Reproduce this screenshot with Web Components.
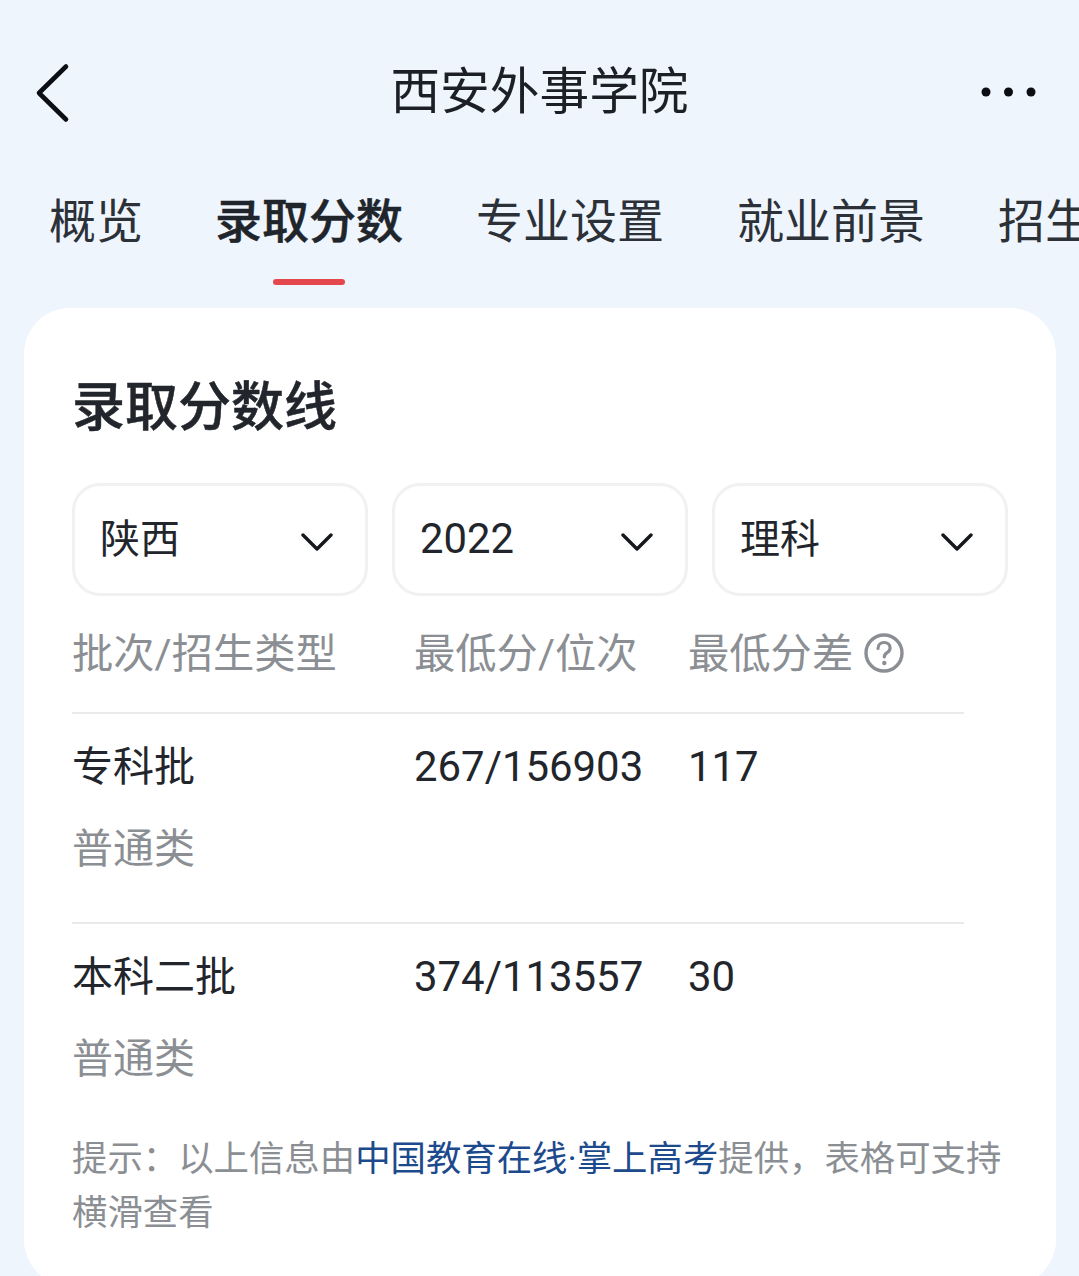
<!DOCTYPE html>
<html lang="zh-CN">
<head>
<meta charset="utf-8">
<title>西安外事学院</title>
<style>
    html, body {
        margin: 0;
        height: 1276px;
        overflow: hidden;
        background: #eff5fd;
        color: #1c2026;
        font-family: Roboto, "Noto Sans CJK SC", sans-serif;
    }
    a { color: #1c4a8c; text-decoration: none; }
</style>
</head>
<body>
<app-page>
    <nav-bar slot="nav">西安外事学院</nav-bar>
    <tab-bar slot="tabs">
        <tab-item first>概览</tab-item>
        <tab-item active>录取分数</tab-item>
        <tab-item>专业设置</tab-item>
        <tab-item>就业前景</tab-item>
        <tab-item>招生</tab-item>
    </tab-bar>
    <score-card slot="card" heading="录取分数线">
        <select-box slot="filters">陕西</select-box>
        <select-box slot="filters" numeric>2022</select-box>
        <select-box slot="filters">理科</select-box>

        <score-head slot="table"></score-head>
        <score-row slot="table" batch="专科批" kind="普通类" score="267/156903" diff="117"></score-row>
        <score-row slot="table" batch="本科二批" kind="普通类" score="374/113557" diff="30"></score-row>

        <div slot="note"><span>提示：以上信息由</span><a>中国教育在线·掌上高考</a><span>提供，表格可支持</span></div>
        <div slot="note">横滑查看</div>
    </score-card>
</app-page>

<script>
// small helper, every element has the same shadow setup
class BaseEl extends HTMLElement {
    render(html) {
        const tpl = document.createElement("template");
        tpl.innerHTML = html;
        this.attachShadow({ mode: "open" }).appendChild(tpl.content.cloneNode(true));
    }
}

class AppPage extends BaseEl {
    connectedCallback() {
        this.render(`
        <style>
            :host {
                display: block;
                width: 1079px;
                height: 1276px;
                overflow: hidden;
                padding-top: 32px;
                box-sizing: border-box;
            }
            .card-wrap { padding: 0 23px 0 24px; }
        </style>
        <slot name="nav"></slot>
        <slot name="tabs"></slot>
        <div class="card-wrap"><slot name="card"></slot></div>
        `);
    }
}

class NavBar extends BaseEl {
    connectedCallback() {
        this.render(`
        <style>
            :host { display: block; }
            .bar {
                height: 120px;
                display: grid;
                grid-template-columns: 1fr auto 1fr;
                align-items: center;
                padding: 0 42px;
            }
            .title { font-size: 49.7px; line-height: 120px; color: #1c2026; }
            .more { justify-self: end; display: block; }
            .back { display: block; margin-left: -7px; margin-top: 2px; }
        </style>
        <div class="bar">
            <svg class="back" width="36" height="62" viewBox="0 0 36 62" fill="none">
                <path d="M31 4.500 4 31 31 57.500" stroke="#0b0e13" stroke-width="4.600" stroke-linecap="round" stroke-linejoin="round"/>
            </svg>
            <div class="title"><slot></slot></div>
            <svg class="more" width="56" height="12" viewBox="0 0 56 12">
                <circle cx="5" cy="6" r="4.500" fill="#0b0e13"/>
                <circle cx="27.500" cy="6" r="4.500" fill="#0b0e13"/>
                <circle cx="50" cy="6" r="4.500" fill="#0b0e13"/>
            </svg>
        </div>
        `);
    }
}

class TabBar extends BaseEl {
    connectedCallback() {
        this.render(`
        <style>
            :host { display: block; overflow: hidden; }
            .tabs {
                display: flex;
                gap: 73px;
                padding: 31px 0 0 48px;
                height: 156px;
                box-sizing: border-box;
                white-space: nowrap;
            }
        </style>
        <div class="tabs"><slot></slot></div>
        `);
    }
}

class TabItem extends BaseEl {
    connectedCallback() {
        this.render(`
        <style>
            :host {
                display: flex;
                flex: none;
                flex-direction: column;
                align-items: center;
                font-size: 47px;
                line-height: 70px;
                color: #2c3138;
            }
            :host([first]) { margin: 0 -1px 0 1px; }
            :host([active]) { font-weight: 500; color: #20252c; -webkit-text-stroke: 0.5px #20252c; }
            .text { padding-top: 4px; }
            .line { width: 72px; height: 6px; border-radius: 3px; margin-top: 22px; }
            :host([active]) .line { background: #e5474e; }
        </style>
        <div class="text"><slot></slot></div>
        <div class="line"></div>
        `);
    }
}

class ScoreCard extends BaseEl {
    connectedCallback() {
        const heading = this.getAttribute("heading");
        this.render(`
        <style>
            :host {
                display: block;
                background: #fff;
                border-radius: 46px;
                padding: 62px 48px 0 49px;
                height: 978px;
                box-sizing: border-box;
            }
            h2 {
                margin: 0 0 0 -1px;
                font-size: 53px;
                line-height: 76px;
                font-weight: 500;
                -webkit-text-stroke: 0.5px #22262c;
                color: #22262c;
            }
            .filters {
                display: grid;
                grid-template-columns: repeat(3, 296px);
                gap: 24px;
                margin: 37px 0 0 -1px;
            }
            .table { width: 892px; margin-left: -1px; }
            .note {
                margin: 28px 0 0 -1px;
                font-size: 35.4px;
                line-height: 54px;
                color: #8b8f94;
                white-space: nowrap;
            }
        </style>
        <h2>${heading}</h2>
        <div class="filters"><slot name="filters"></slot></div>
        <div class="table"><slot name="table"></slot></div>
        <div class="note"><slot name="note"></slot></div>
        `);
    }
}

class SelectBox extends BaseEl {
    connectedCallback() {
        this.render(`
        <style>
            :host {
                display: flex;
                align-items: center;
                justify-content: space-between;
                height: 113px;
                box-sizing: border-box;
                border: 3px solid #f0f1f3;
                border-radius: 28px;
                padding: 0 32px 0 25px;
                font-size: 40px;
                color: #22262c;
            }
            :host([numeric]) { font-size: 41.8px; }
            .label { position: relative; top: -4px; }
            :host([numeric]) .label { top: -1px; }
            svg { display: block; margin-top: 4px; }
        </style>
        <span class="label"><slot></slot></span>
        <svg width="32" height="22" viewBox="0 0 32 22" fill="none">
            <path d="M2 4 16 18 30 4" stroke="#15181d" stroke-width="3.400" stroke-linecap="round" stroke-linejoin="round"/>
        </svg>
        `);
    }
}

const COLS = "342px 274px 1fr";

class ScoreHead extends BaseEl {
    connectedCallback() {
        this.render(`
        <style>
            :host {
                display: grid;
                grid-template-columns: ${COLS};
                align-items: center;
                height: 118px;
                box-sizing: border-box;
                border-bottom: 2px solid #e9eaec;
                padding-bottom: 8px;
                font-size: 41.3px;
                color: #8b8f94;
                white-space: nowrap;
            }
            .tip { display: inline-flex; align-items: center; gap: 11px; }
            svg { display: block; transform: translateY(3px); }
        </style>
        <div>批次/招生类型</div>
        <div>最低分/位次</div>
        <div class="tip">最低分差
            <svg width="40" height="40" viewBox="0 0 40 40" fill="none">
                <circle cx="20" cy="20" r="18" stroke="#8b8f94" stroke-width="3.400"/>
                <path d="M14 15.500c0-3.600 2.700-6 6.100-6 3.400 0 6 2.300 6 5.400 0 2.300-1.200 3.500-3 4.800-1.800 1.200-2.800 2.200-2.800 4.300" stroke="#8b8f94" stroke-width="3.200" stroke-linecap="round"/>
                <circle cx="20.300" cy="30" r="2.200" fill="#8b8f94"/>
            </svg>
        </div>
        `);
    }
}

class ScoreRow extends BaseEl {
    connectedCallback() {
        const a = (n) => this.getAttribute(n);
        this.render(`
        <style>
            :host {
                display: grid;
                grid-template-columns: ${COLS};
                height: 210px;
                box-sizing: border-box;
                padding-top: 23px;
                font-size: 41px;
                line-height: 60px;
                color: #22262c;
                white-space: nowrap;
            }
            :host(:not(:last-of-type)) { border-bottom: 2px solid #e9eaec; }
            :host(:last-of-type) { height: 180px; }
            .kind { color: #8b8f94; margin-top: 22px; }
            .num { font-size: 41.9px; }
        </style>
        <div>
            <div>${a("batch")}</div>
            <div class="kind">${a("kind")}</div>
        </div>
        <div class="num">${a("score")}</div>
        <div class="num">${a("diff")}</div>
        `);
    }
}

customElements.define("app-page", AppPage);
customElements.define("nav-bar", NavBar);
customElements.define("tab-bar", TabBar);
customElements.define("tab-item", TabItem);
customElements.define("score-card", ScoreCard);
customElements.define("select-box", SelectBox);
customElements.define("score-head", ScoreHead);
customElements.define("score-row", ScoreRow);
</script>
</body>
</html>
